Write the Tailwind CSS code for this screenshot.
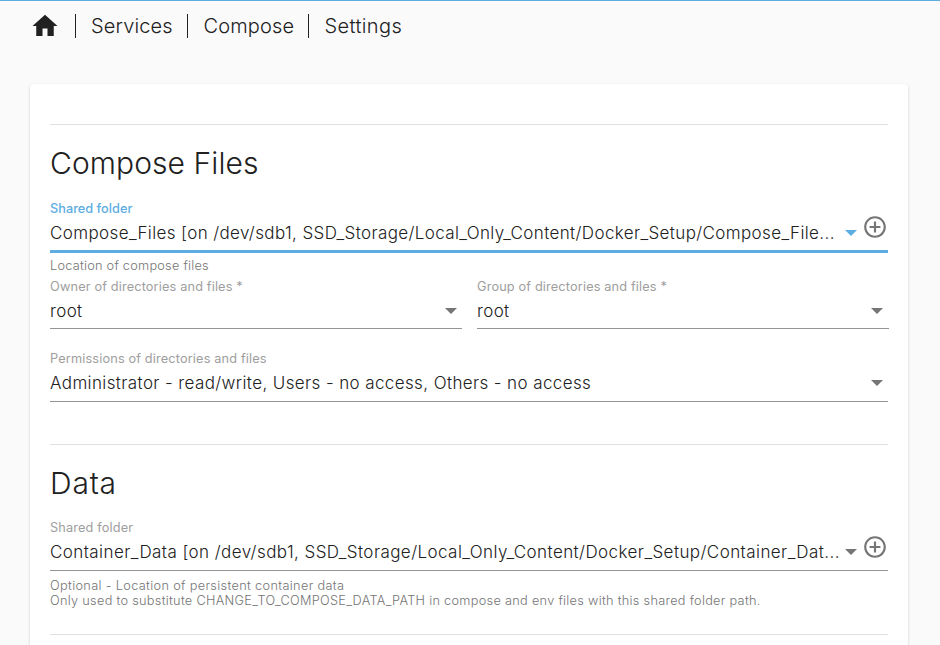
<!DOCTYPE html>
<html lang="en">
<head>
<meta charset="utf-8">
<title>Services | Compose | Settings</title>
<script src="https://cdn.jsdelivr.net/npm/@tailwindcss/browser@4"></script>
</head>
<body class="h-[645px] overflow-hidden border-t border-[#5dade2] bg-[#fafafa] font-['Inter',sans-serif] font-light text-[#212121]">
  <nav class="flex h-[50px] items-center pl-[30px] text-[20px] tracking-[0.4px]">
    <svg class="mr-[15px] size-[30px]" viewBox="0 0 24 24" fill="currentColor"><path d="M10 20v-6h4v6h5v-8h3L12 3 2 12h3v8z"/></svg>
    <span class="h-6 w-px bg-[#212121]"></span>
    <a class="w-[111px] pl-[15px] tracking-[0.15px]">Services</a>
    <span class="h-6 w-px bg-[#212121]"></span>
    <a class="w-[120px] pl-[15.5px] tracking-[0.15px]">Compose</a>
    <span class="h-6 w-px bg-[#212121]"></span>
    <a class="pl-[15.5px]">Settings</a>
  </nav>
  <main class="mt-[33px] ml-[30px] h-[561px] w-[878px] rounded-t-[4px] bg-white px-5 pt-10 shadow-[0_1px_3px_rgba(0,0,0,0.18)]">
    <section class="h-80 border-t border-[#e0e0e0] pt-[18px]">
      <h2 class="h-10 text-[30px] leading-10 tracking-[0.08px]">Compose Files</h2>
      <div class="mt-[17px] h-[69px]">
        <div class="flex h-[53px] border-b-3 border-[#5dade2]">
          <div class="w-[790px]">
            <div class="h-4 pt-px text-[12.75px] leading-4 font-medium tracking-[0px] text-[#5dade2]">Shared folder</div>
            <div class="mt-[5px] h-6 text-[17px] leading-6 tracking-[0.38px] whitespace-nowrap">Compose_Files [on /dev/sdb1, SSD_Storage/Local_Only_Content/Docker_Setup/Compose_File...</div>
          </div>
          <svg class="mt-[30px] ml-[5px] h-[6px] w-3" viewBox="0 0 12 6" fill="#5dade2"><path d="M0 0h12L6 6z"/></svg>
          <svg class="mt-[14px] ml-[5px] size-[26px]" viewBox="0 0 24 24" fill="#757575"><path d="M13 7h-2v4H7v2h4v4h2v-4h4v-2h-4V7zm-1-5C6.480 2 2 6.480 2 12s4.480 10 10 10 10-4.480 10-10S17.520 2 12 2zm0 18c-4.410 0-8-3.590-8-8s3.590-8 8-8 8 3.590 8 8-3.590 8-8 8z"/></svg>
        </div>
        <div class="mt-[5px] text-[12.75px] leading-4 tracking-[0.24px] text-[#757575]">Location of compose files</div>
      </div>
      <div class="mt-[9px] flex gap-[15px]">
        <div class="flex h-[51px] w-[412px] shrink-0 justify-between border-b border-[#949494] pr-[5px]">
          <div>
            <div class="h-4 pt-px text-[12.75px] leading-4 font-normal tracking-[0.14px] text-[#9e9e9e]">Owner of directories and files *</div>
            <div class="mt-[5px] h-6 text-[17px] leading-6 tracking-[0.38px]">root</div>
          </div>
          <svg class="mt-[30px] h-[6px] w-3" viewBox="0 0 12 6" fill="#757575"><path d="M0 0h12L6 6z"/></svg>
        </div>
        <div class="flex h-[51px] w-[412px] shrink-0 justify-between border-b border-[#949494] pr-[6px]">
          <div>
            <div class="h-4 pt-px text-[12.75px] leading-4 font-normal tracking-[0.14px] text-[#9e9e9e]">Group of directories and files *</div>
            <div class="mt-[5px] h-6 text-[17px] leading-6 tracking-[0.38px]">root</div>
          </div>
          <svg class="mt-[30px] h-[6px] w-3" viewBox="0 0 12 6" fill="#757575"><path d="M0 0h12L6 6z"/></svg>
        </div>
      </div>
      <div class="mt-[21px] flex h-[52px] justify-between border-b border-[#949494] pr-[5px]">
        <div>
          <div class="h-4 pt-px text-[12.75px] leading-4 font-normal tracking-[0.14px] text-[#9e9e9e]">Permissions of directories and files</div>
          <div class="mt-[5px] h-6 text-[17px] leading-6 tracking-[0.39px]">Administrator - read/write, Users - no access, Others - no access</div>
        </div>
        <svg class="mt-[30px] h-[6px] w-3" viewBox="0 0 12 6" fill="#757575"><path d="M0 0h12L6 6z"/></svg>
      </div>
    </section>
    <section class="h-[190px] border-t border-[#e0e0e0] pt-[18px]">
      <h2 class="h-10 text-[30px] leading-10 tracking-[0.8px]">Data</h2>
      <div class="mt-4 flex h-[52px] border-b border-[#949494]">
        <div class="w-[790px]">
          <div class="h-4 pt-px text-[12.75px] leading-4 font-normal tracking-[0.14px] text-[#9e9e9e]">Shared folder</div>
          <div class="mt-[5px] h-6 text-[17px] leading-6 tracking-[0.43px] whitespace-nowrap">Container_Data [on /dev/sdb1, SSD_Storage/Local_Only_Content/Docker_Setup/Container_Dat...</div>
        </div>
        <svg class="mt-[30px] ml-[5px] h-[6px] w-3" viewBox="0 0 12 6" fill="#757575"><path d="M0 0h12L6 6z"/></svg>
        <svg class="mt-[15px] ml-[5px] size-[26px]" viewBox="0 0 24 24" fill="#757575"><path d="M13 7h-2v4H7v2h4v4h2v-4h4v-2h-4V7zm-1-5C6.480 2 2 6.480 2 12s4.480 10 10 10 10-4.480 10-10S17.520 2 12 2zm0 18c-4.410 0-8-3.590-8-8s3.590-8 8-8 8 3.590 8 8-3.590 8-8 8z"/></svg>
      </div>
      <div class="mt-[7px] text-[12.75px] leading-[15px] text-[#757575]"><p class="tracking-[0.33px]">Optional - Location of persistent container data</p><p class="tracking-[0.285px]">Only used to substitute CHANGE_TO_COMPOSE_DATA_PATH in compose and env files with this shared folder path.</p></div>
    </section>
    <hr class="border-[#e0e0e0]">
  </main>
</body>
</html>
